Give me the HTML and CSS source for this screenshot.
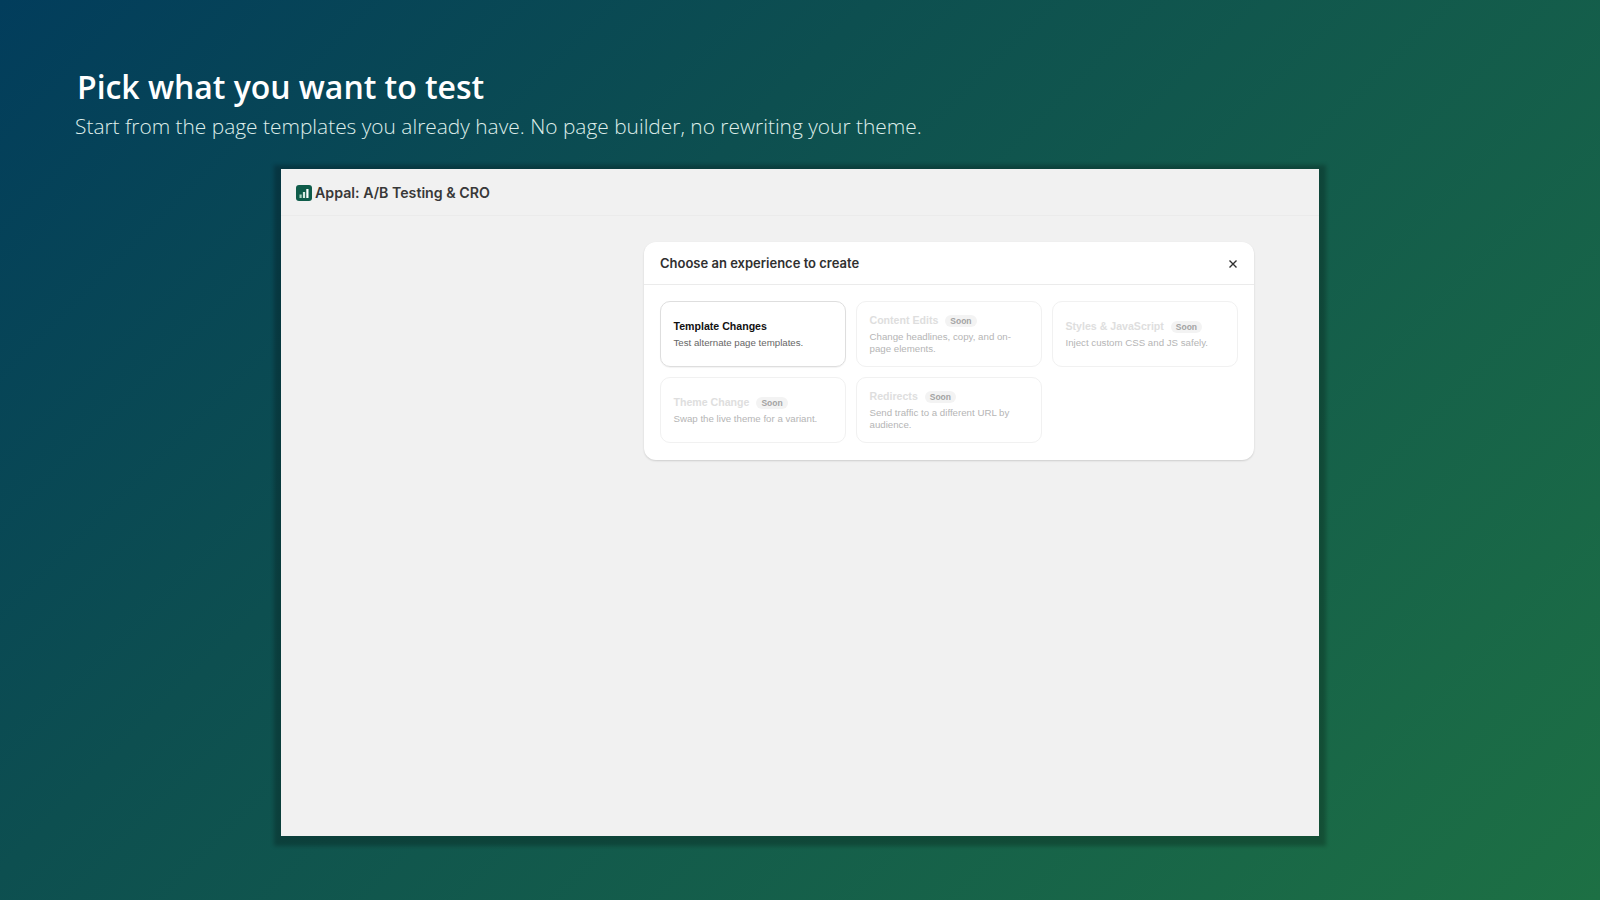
FILE: index.html
```html
<!DOCTYPE html>
<html lang="en">
<head>
	<meta charset="UTF-8">
	<title>Pick what you want to test</title>
	<link rel="stylesheet" href="styles.css">
</head>
<body>
	<header class="intro">
		<h1>Pick what you want to test</h1>
		<p>Start from the page templates you already have. No page builder, no rewriting your theme.</p>
	</header>

	<section class="window">
		<div class="appBar">
			<svg class="appLogo" viewBox="0 0 16 16" aria-hidden="true">
				<rect width="16" height="16" rx="3" fill="#0f5c4a"></rect>
				<rect x="3.5" y="9.5" width="2.2" height="3.5" fill="#a9d3c2"></rect>
				<rect x="6.9" y="7" width="2.2" height="6" fill="#d6ebe2"></rect>
				<rect x="10.3" y="4" width="2.2" height="9" fill="#ffffff"></rect>
			</svg>
			<span>Appal: A/B Testing &amp; CRO</span>
		</div>

		<div class="appMain">
			<div class="modal">
				<div class="modalHead">
					<h2>Choose an experience to create</h2>
					<svg class="closeIcon" viewBox="0 0 10 10" aria-hidden="true">
						<path d="M1.5 1.5 8.5 8.5M8.5 1.5 1.5 8.5"></path>
					</svg>
				</div>
				<div class="cardGrid">
					<div class="card active">
						<h3>Template Changes</h3>
						<p>Test alternate page templates.</p>
					</div>
					<div class="card">
						<h3>Content Edits <span class="soon">Soon</span></h3>
						<p>Change headlines, copy, and on-page elements.</p>
					</div>
					<div class="card">
						<h3>Styles &amp; JavaScript <span class="soon">Soon</span></h3>
						<p>Inject custom CSS and JS safely.</p>
					</div>
					<div class="card">
						<h3>Theme Change <span class="soon">Soon</span></h3>
						<p>Swap the live theme for a variant.</p>
					</div>
					<div class="card">
						<h3>Redirects <span class="soon">Soon</span></h3>
						<p>Send traffic to a different URL by audience.</p>
					</div>
				</div>
			</div>
		</div>
	</section>
</body>
</html>
```

FILE: styles.css
```css
html, body {
	height: 100%;
}
body {
	margin: 0;
	overflow: hidden;
	background: linear-gradient(135deg, #023d5c 0%, #0d4f50 35%, #1d7044 100%);
	font-family: "Liberation Sans", Arial, sans-serif;
}
h1, h2, h3, p {
	margin: 0;
}
.intro {
	height: 169px;
	padding: 65px 0 0 75px;
	box-sizing: border-box;
	font-family: "Open Sans", sans-serif;
}
.intro h1 {
	margin-left: 2px;
	font-size: 32px;
	line-height: 44px;
	font-weight: 600;
	letter-spacing: -.04px;
	color: #fff;
}
.intro p {
	padding-top: 3px;
	font-size: 20.9px;
	line-height: 28px;
	font-weight: 300;
	color: #dfeeea;
}
.window {
	width: 1038px;
	height: 667px;
	margin-left: 281px;
	background: #f1f1f1;
	box-shadow: 0 3px 4px 7px rgba(0, 0, 0, .24);
}
.appBar {
	display: flex;
	align-items: center;
	gap: 3px;
	height: 47px;
	padding: 1px 0 0 15px;
	box-sizing: border-box;
	border-bottom: 1px solid #ebebeb;
	font-family: Inter, sans-serif;
	font-size: 14.2px;
	font-weight: 600;
	color: #383838;
}
.appLogo {
	width: 16px;
	height: 16px;
}
.appMain {
	display: flex;
	justify-content: flex-end;
	padding: 26px 65px 0 0;
}
.modal {
	width: 610px;
	background: #fff;
	border-radius: 12px;
	box-shadow: 0 1px 2px rgba(0, 0, 0, .15);
}
.modalHead {
	display: flex;
	align-items: center;
	justify-content: space-between;
	height: 42px;
	padding: 0 16px;
	border-bottom: 1px solid #ebebeb;
}
.modalHead h2 {
	font-family: Inter, sans-serif;
	font-size: 13px;
	font-weight: 600;
	color: #303030;
}
.closeIcon {
	width: 10px;
	height: 10px;
	margin-top: 2px;
	fill: none;
	stroke: #303030;
	stroke-width: 1.4;
}
.cardGrid {
	display: grid;
	grid-template-columns: repeat(3, 186px);
	grid-auto-rows: 66px;
	gap: 10px;
	padding: 16px 16px 17px;
}
.card {
	display: flex;
	flex-direction: column;
	justify-content: center;
	padding: 0 12.5px 1px;
	border: 1px solid #f1f1f1;
	border-radius: 10px;
	box-sizing: border-box;
	font-size: 9.7px;
	line-height: 11.5px;
	color: #b5b5b5;
}
.card h3 {
	margin-bottom: 4px;
	font-size: 10.6px;
	line-height: 14px;
	font-weight: 700;
	color: #dedede;
}
.card.active {
	border-color: #dedede;
	box-shadow: 0 1px 1px rgba(0, 0, 0, .05);
	color: #666;
}
.card.active h3 {
	color: #111;
}
.soon {
	display: inline-block;
	margin-left: 4px;
	padding: 0 5px;
	border-radius: 7px;
	background: #f3f3f3;
	font-size: 8.5px;
	line-height: 12px;
	color: #a3a3a3;
}
```
